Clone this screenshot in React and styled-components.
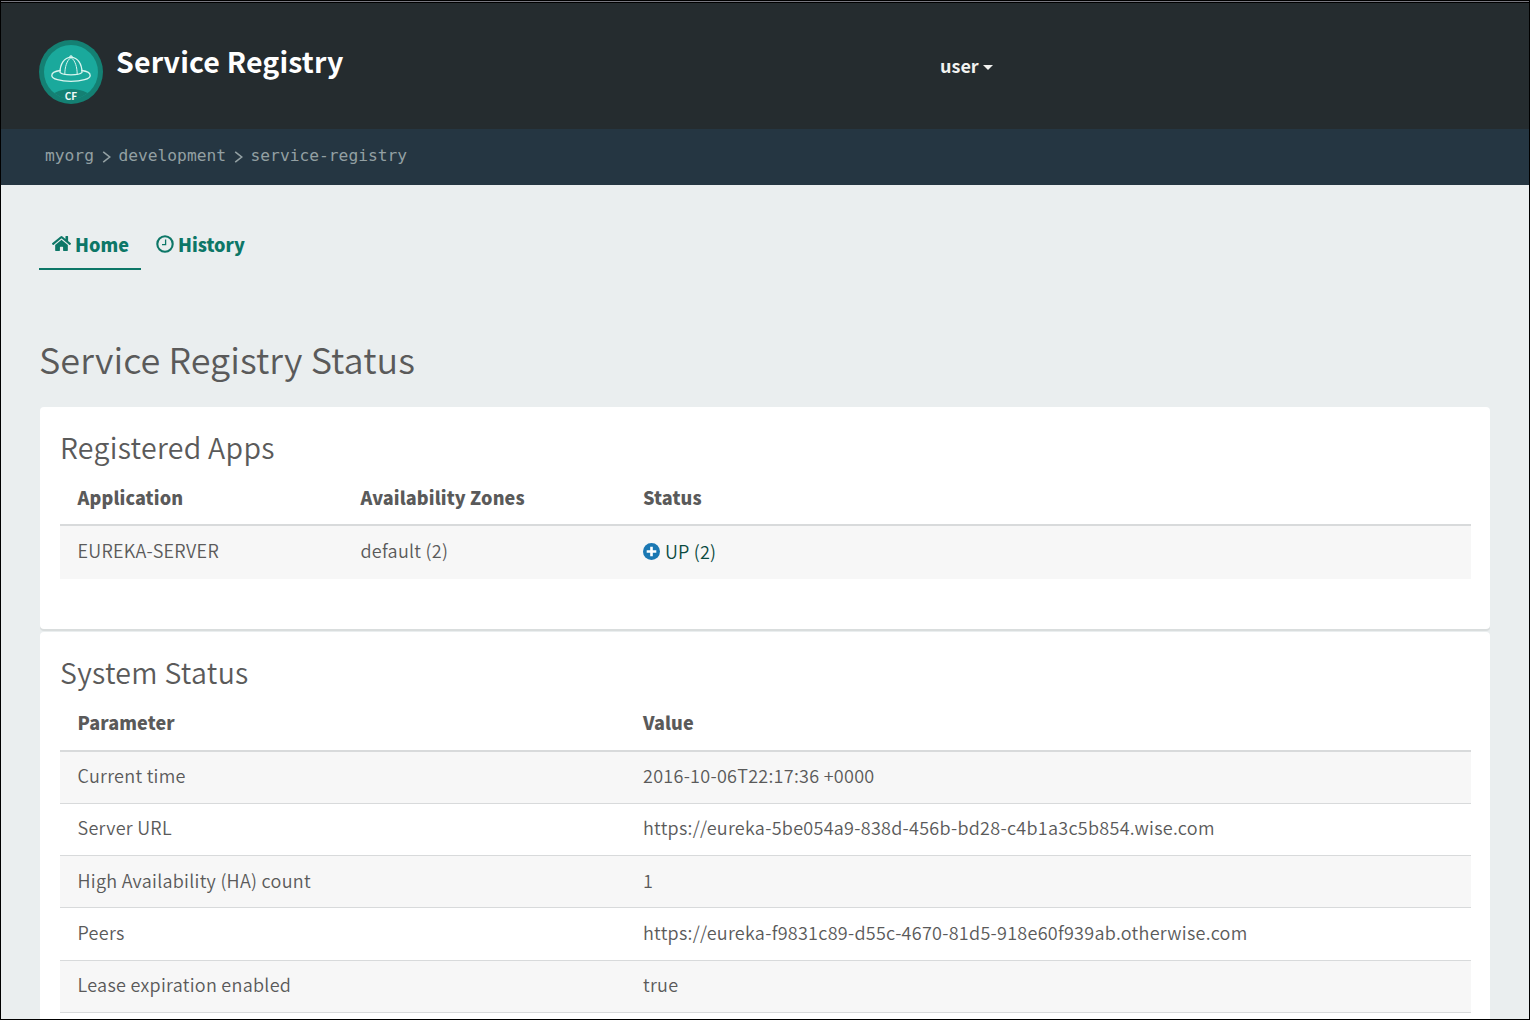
import React from "react";
import styled, { createGlobalStyle } from "styled-components";
import { FaHome } from "react-icons/fa";

const Global = createGlobalStyle`
  * { box-sizing: border-box; }
  body { margin: 0; background: #000; overflow: hidden; }
`;

const Page = styled.div`
  width: 1530px;
  height: 1020px;
  overflow: hidden;
  display: flex;
  flex-direction: column;
  border: 1px solid #000;
  background: #eaeeef;
  color: #5a5a5a;
  font-family: "Noto Sans CJK JP", "Open Sans", sans-serif;
  font-size: 18px;
`;

const Header = styled.header`
  flex: none;
  height: 128px;
  border-top: 1px solid #77777f;
  box-shadow: inset 0 1px 0 #000;
  background: #252c2f;
  display: flex;
  align-items: flex-start;
  padding-left: 38px;
`;

const Logo = styled.svg`
  flex: none;
  width: 64px;
  height: 64px;
  margin-top: 38px;
  display: block;
`;

const Brand = styled.h1`
  margin: 39px 0 0 13px;
  width: 824px;
  font-size: 28.5px;
  line-height: 40px;
  font-weight: 700;
  letter-spacing: 0.15px;
  color: #fff;
  white-space: nowrap;
`;

const UserMenu = styled.div`
  margin-top: 47px;
  height: 32px;
  line-height: 32px;
  display: flex;
  align-items: center;
  gap: 4px;
  font-size: 18px;
  font-weight: 700;
  color: #f2f2f0;
`;

const Caret = styled.span`
  margin-top: 4px;
  border: 5px solid transparent;
  border-top-color: #f2f2f0;
  border-bottom: 0;
`;

const Crumbs = styled.nav`
  flex: none;
  height: 56px;
  background: #253642;
  display: flex;
  padding: 0 0 4px 44px;
  align-items: center;
  gap: 7.75px;
  font-family: "DejaVu Sans Mono", monospace;
  font-size: 16.25px;
  color: #93a0a3;
`;

const Chevron = styled.svg`
  width: 9px;
  height: 12px;
  margin-top: 3px;
`;

const Tabs = styled.div`
  flex: none;
  margin: 37px 0 0 38px;
  display: flex;
  gap: 2px;
`;

const Tab = styled.div`
  height: 48px;
  width: ${(p) => p.$width}px;
  padding: 0 0 3px 13px;
  display: flex;
  align-items: center;
  gap: 4px;
  font-size: 18px;
  font-weight: 900;
  color: #0d7767;
  border-bottom: 2px solid ${(p) => (p.$active ? "#0d7767" : "transparent")};
`;

const Title = styled.h2`
  flex: none;
  margin: 58px 0 19px 38px;
  font-size: 36px;
  line-height: 60px;
  font-weight: 350;
  letter-spacing: 0.05px;
`;

const Card = styled.section`
  flex: none;
  height: ${(p) => p.$height}px;
  margin: 0 39px 3px;
  padding: 20px 19px 0 20px;
  background: #fff;
  border-radius: 4px;
  box-shadow: 0 2px 0 #d9dddd;
`;

const CardTitle = styled.h3`
  margin: 0;
  font-size: 28.5px;
  line-height: 40px;
  font-weight: 350;
  letter-spacing: 0.3px;
`;

const Table = styled.div`
  width: 1411px;
`;

const Row = styled.div`
  display: grid;
  grid-template-columns: ${(p) => p.$cols};
  align-items: center;
  padding: ${(p) => (p.$head ? "2px 0 0" : "0 0 4px")} 17.5px;
  height: ${(p) => (p.$head ? 59.3 : 52.25)}px;
  font-weight: ${(p) => (p.$head ? 900 : 350)};
  letter-spacing: ${(p) => (p.$head ? 0.12 : 0.28)}px;
  background: ${(p) => (p.$striped ? "#f7f7f7" : "#fff")};
  border-bottom: ${(p) =>
    p.$head ? "2px solid #d8dadb" : p.$line ? "1px solid #d8dadb" : "0"};
`;

const Status = styled.span`
  display: flex;
  align-items: center;
  gap: 5px;
  padding-top: 2px;
  letter-spacing: 0.19px;
  color: #0a4a40;
`;

function LogoMark() {
  return (
    <Logo viewBox="0 0 64 64">
      <defs>
        <clipPath id="disc">
          <circle cx="32" cy="32" r="27" />
        </clipPath>
      </defs>
      <circle cx="32" cy="32" r="32" fill="#148073" />
      <circle cx="32" cy="32" r="27" fill="#1aa99c" />
      <ellipse cx="32" cy="61" rx="22" ry="12" fill="#148073" clipPath="url(#disc)" />
      <g fill="none" stroke="#d9f5ef" strokeWidth="1.3" strokeLinecap="round">
        <path d="M21.2 30.5c-5.2.7-8.4 2.6-8.4 4.9 0 3.5 8.6 6 19.2 6s19.2-2.500 19.2-6c0-2.300-3.200-4.200-8.400-4.900" />
        <path d="M21 32.4c0-8 4-15 11-15s11 7 11 15c-3 3.300-19 3.300-22 0z" />
        <path d="M25.8 34.2c0-7 2-14 6.200-16.600 4.200 2.600 6.200 9.600 6.200 16.600" strokeWidth="1" />
        <path d="M30.8 16.8q1.200-1.700 2.400 0" />
      </g>
      <text x="32" y="59.700" textAnchor="middle" fontFamily="Noto Sans CJK JP, sans-serif" fontWeight="700" fontSize="10" fill="#f0fbf9">
        CF
      </text>
    </Logo>
  );
}

function Separator() {
  return (
    <Chevron viewBox="0 0 9 12" fill="none" stroke="#93a0a3" strokeWidth="1.6">
      <path d="M1.2.8 7.700 6 1.200 11.200" />
    </Chevron>
  );
}

function Clock() {
  return (
    <svg width="18" height="18" viewBox="0 0 18 18" fill="none" stroke="currentColor">
      <circle cx="9" cy="9" r="7.700" strokeWidth="2.100" />
      <path d="M9.600 4.500v5.200H6" strokeWidth="1.300" />
    </svg>
  );
}

function Plus() {
  return (
    <svg width="17" height="17" viewBox="0 0 17 17">
      <circle cx="8.500" cy="8.500" r="8.500" fill="#1b78b3" />
      <path d="M8.500 3.700v9.600M3.700 8.500h9.600" stroke="#fff" strokeWidth="2.600" />
    </svg>
  );
}

const params = [
  ["Current time", "2016-10-06T22:17:36 +0000"],
  ["Server URL", "https://eureka-5be054a9-838d-456b-bd28-c4b1a3c5b854.wise.com"],
  ["High Availability (HA) count", "1"],
  ["Peers", "https://eureka-f9831c89-d55c-4670-81d5-918e60f939ab.otherwise.com"],
  ["Lease expiration enabled", "true"],
];

const appCols = "283px 282.5px 1fr";
const paramCols = "565.5px 1fr";

export default function App() {
  return (
    <Page>
      <Global />
      <Header>
        <LogoMark />
        <Brand>Service Registry</Brand>
        <UserMenu>
          <span>user</span>
          <Caret />
        </UserMenu>
      </Header>
      <Crumbs>
        <span>myorg</span>
        <Separator />
        <span>development</span>
        <Separator />
        <span>service-registry</span>
      </Crumbs>
      <Tabs>
        <Tab $active $width={102}>
          <FaHome size={19} />
          <span>Home</span>
        </Tab>
        <Tab $width={110}>
          <Clock />
          <span>History</span>
        </Tab>
      </Tabs>
      <Title>Service Registry Status</Title>
      <Card $height={222.3}>
        <CardTitle>Registered Apps</CardTitle>
        <Table>
          <Row $head $cols={appCols}>
            <span>Application</span>
            <span>Availability Zones</span>
            <span>Status</span>
          </Row>
          <Row $striped $cols={appCols}>
            <span>EUREKA-SERVER</span>
            <span>default (2)</span>
            <Status>
              <Plus />
              <span>UP (2)</span>
            </Status>
          </Row>
        </Table>
      </Card>
      <Card $height={420}>
        <CardTitle>System Status</CardTitle>
        <Table>
          <Row $head $cols={paramCols}>
            <span>Parameter</span>
            <span>Value</span>
          </Row>
          {params.map(([name, value], i) => (
            <Row key={name} $line $striped={i % 2 === 0} $cols={paramCols}>
              <span>{name}</span>
              <span>{value}</span>
            </Row>
          ))}
        </Table>
      </Card>
    </Page>
  );
}
